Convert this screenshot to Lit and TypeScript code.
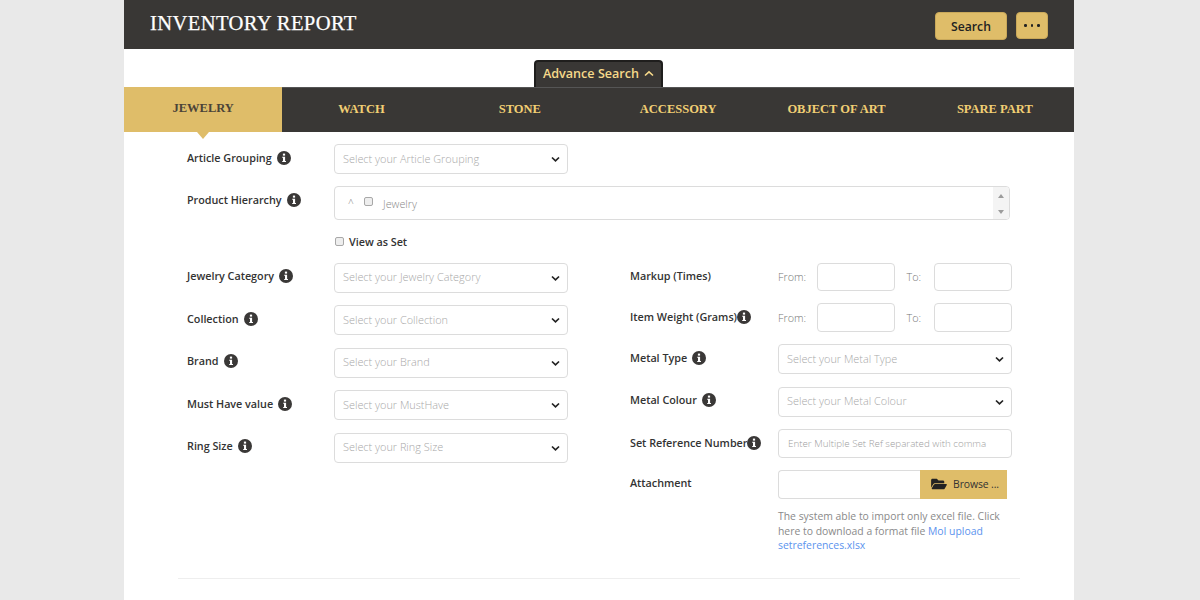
import { LitElement, html, css, svg } from 'lit';
import { customElement } from 'lit/decorators.js';

const info = html`<svg class="info" viewBox="0 0 14 14" width="14" height="14">
  <circle cx="7" cy="7" r="7" fill="#3a3837"></circle>
  <rect x="5.9" y="2.6" width="2.2" height="2" fill="#fff"></rect>
  <path d="M5.2 5.7H8.1V9.9H9V11H5.2V9.9H6V6.8H5.2Z" fill="#fff"></path>
</svg>`;

const chevron = svg`<path d="M1 1.5L4.5 4.8L8 1.5" fill="none" stroke="#222" stroke-width="1.7"></path>`;

const selectBox = (placeholder: string) => html`<div class="select">
  <span>${placeholder}</span>
  <svg viewBox="0 0 9 6" width="9" height="6">${chevron}</svg>
</div>`;

const leftRows = [
  ['Jewelry Category', 'Select your Jewelry Category'],
  ['Collection', 'Select your Collection'],
  ['Brand', 'Select your Brand'],
  ['Must Have value', 'Select your MustHave'],
  ['Ring Size', 'Select your Ring Size'],
] as const;

@customElement('app-root')
export class AppRoot extends LitElement {
  static styles = css`
    :host {
      display: block;
      min-height: 600px;
      background: #e9e9e9;
      font-family: "Open Sans", sans-serif;
      --dark: #393735;
      --gold: #dfbd69;
    }
    .page {
      width: 950px;
      height: 600px;
      margin-left: 124px;
      background: #fff;
      overflow: hidden;
    }
    .header {
      height: 49px;
      background: var(--dark);
      display: flex;
      align-items: flex-start;
      justify-content: space-between;
      padding: 0 26px;
      box-sizing: border-box;
    }
    .title {
      margin: 10px 0 0;
      font: 400 20.6px/26px "Liberation Serif", serif;
      letter-spacing: 0.38px;
      -webkit-text-stroke: 0.25px #fff;
      color: #fff;
    }
    .actions {
      display: flex;
      gap: 9px;
      margin-top: 12px;
    }
    .btn {
      background: var(--gold);
      border: 1px solid #c9a85a;
      border-radius: 4px;
      box-sizing: border-box;
      color: #222;
      font-size: 12.2px;
      font-weight: 600;
      display: flex;
      align-items: center;
      justify-content: center;
    }
    .btn.search {
      width: 72px;
      height: 28px;
    }
    .btn.more {
      width: 32px;
      height: 27px;
      gap: 4px;
    }
    .btn.more i {
      width: 2.5px;
      height: 2.5px;
      border-radius: 50%;
      background: #222;
    }
    .advance-row {
      height: 38px;
      display: flex;
      justify-content: center;
      align-items: flex-end;
    }
    .advance {
      width: 129px;
      height: 27px;
      margin-right: 1px;
      padding-bottom: 2px;
      box-sizing: border-box;
      background: var(--dark);
      border: 2px solid #1f1e1d;
      border-bottom: 0;
      border-radius: 4px 4px 0 0;
      color: #f6d98a;
      font-size: 12.6px;
      font-weight: 600;
      display: flex;
      align-items: center;
      justify-content: center;
      gap: 5px;
    }
    .tabs {
      display: grid;
      grid-template-columns: repeat(6, 1fr);
      height: 45px;
      background: var(--dark);
      border-top: 1px solid #555;
      box-sizing: border-box;
    }
    .tab {
      position: relative;
      display: flex;
      align-items: center;
      justify-content: center;
      padding-bottom: 2px;
      font: 700 12.5px "Liberation Serif", serif;
      color: #f2cf74;
    }
    .tab.active {
      background: var(--gold);
      color: #4b4338;
      margin-top: -1px;
    }
    .tab.active::after {
      content: "";
      position: absolute;
      left: 50%;
      top: 100%;
      margin-left: -6px;
      border: 6px solid transparent;
      border-top: 7px solid var(--gold);
      border-bottom: 0;
    }
    .form {
      padding: 12px 0 0 63px;
    }
    .row {
      display: flex;
      align-items: flex-start;
    }
    .row.first {
      margin-bottom: 12px;
    }
    .label {
      width: 147px;
      flex: none;
      display: flex;
      align-items: center;
      gap: 5px;
      font-size: 10.8px;
      font-weight: 600;
      letter-spacing: -0.02px;
      color: #333;
      padding-top: 5.5px;
      line-height: 16px;
      white-space: nowrap;
    }
    .label.tight {
      gap: 0;
    }
    .info {
      flex: none;
    }
    .select {
      width: 234px;
      height: 30px;
      box-sizing: border-box;
      border: 1px solid #dcdcdc;
      border-radius: 4px;
      display: flex;
      align-items: center;
      justify-content: space-between;
      padding: 0 7px 2px 8px;
      font-size: 10.9px;
      font-weight: 300;
      color: #a8a8a8;
      background: #fff;
    }
    .select svg {
      margin-top: 2px;
    }
    .tree {
      width: 676px;
      height: 34px;
      box-sizing: border-box;
      border: 1px solid #dcdcdc;
      border-radius: 4px;
      display: flex;
      align-items: center;
      font-size: 10.8px;
      font-weight: 300;
      color: #888;
      overflow: hidden;
    }
    .caret {
      margin-left: 13px;
      width: 16px;
      font-size: 10px;
      color: #888;
    }
    .check {
      display: inline-block;
      width: 9px;
      height: 9px;
      flex: none;
      background: #eeeeee;
      border: 1px solid #a8a8a8;
      border-radius: 2px;
      box-sizing: border-box;
    }
    .tree .check {
      margin-top: -4px;
    }
    .tree .name {
      margin-left: 10px;
      flex: 1;
    }
    .scroll {
      width: 16px;
      align-self: stretch;
      background: #f4f4f4;
      display: flex;
      flex-direction: column;
      justify-content: space-between;
      align-items: center;
      padding: 7px 0 5px;
      box-sizing: border-box;
    }
    .scroll i {
      border: 3px solid transparent;
      border-bottom: 4px solid #9c9c9c;
      border-top: 0;
    }
    .scroll i.down {
      border-top: 4px solid #9c9c9c;
      border-bottom: 0;
    }
    .view-set {
      margin: 16px 0 0 148px;
      height: 10px;
      display: flex;
      align-items: center;
      gap: 5px;
      font-size: 10.8px;
      font-weight: 600;
      letter-spacing: -0.02px;
      color: #333;
    }
    .columns {
      display: flex;
      margin-top: 16.5px;
    }
    .col-left {
      width: 443px;
      flex: none;
      display: flex;
      flex-direction: column;
      gap: 12.5px;
    }
    .col-right {
      display: flex;
      flex-direction: column;
      gap: 12.4px;
    }
    .col-right .label {
      width: 148px;
    }
    .range {
      display: flex;
      align-items: center;
      font-size: 10.8px;
      font-weight: 300;
      color: #777;
    }
    .range .from {
      width: 38.5px;
    }
    .range .to {
      width: 39px;
      padding-left: 12px;
      box-sizing: border-box;
    }
    .box {
      width: 78px;
      height: 28.5px;
      box-sizing: border-box;
      border: 1px solid #dcdcdc;
      border-radius: 4px;
    }
    .text-input {
      width: 234px;
      height: 28.5px;
      box-sizing: border-box;
      border: 1px solid #dcdcdc;
      border-radius: 4px;
      display: flex;
      align-items: center;
      padding-left: 9px;
      font-size: 9.8px;
      font-weight: 300;
      color: #a0a0a0;
      white-space: nowrap;
    }
    .file {
      display: flex;
      height: 29px;
    }
    .file .empty {
      width: 142px;
      box-sizing: border-box;
      border: 1px solid #dcdcdc;
      border-right: 0;
      border-radius: 4px 0 0 4px;
    }
    .browse {
      width: 87px;
      background: var(--gold);
      display: flex;
      align-items: center;
      justify-content: center;
      gap: 6px;
      padding-left: 3px;
      box-sizing: border-box;
      font-size: 10.4px;
      letter-spacing: -0.1px;
      color: #333;
    }
    .help {
      width: 230px;
      margin: 10px 0 0;
      font-size: 10.4px;
      line-height: 14.7px;
      color: #8a8a8a;
    }
    .help a {
      color: #5b93ee;
    }
    .rule {
      height: 1px;
      background: #eeeeee;
      margin: 25px 0 0 -9px;
      width: 842px;
    }
  `;

  render() {
    return html`<div class="page">
      <div class="header">
        <h1 class="title">INVENTORY REPORT</h1>
        <div class="actions">
          <div class="btn search">Search</div>
          <div class="btn more"><i></i><i></i><i></i></div>
        </div>
      </div>
      <div class="advance-row">
        <div class="advance">
          Advance Search
          <svg viewBox="0 0 10 7" width="10" height="7">
            <path d="M1 5.5L5 1.8L9 5.5" fill="none" stroke="#f6d98a" stroke-width="1.6"></path>
          </svg>
        </div>
      </div>
      <div class="tabs">
        <div class="tab active">JEWELRY</div>
        <div class="tab">WATCH</div>
        <div class="tab">STONE</div>
        <div class="tab">ACCESSORY</div>
        <div class="tab">OBJECT OF ART</div>
        <div class="tab">SPARE PART</div>
      </div>
      <div class="form">
        <div class="row first">
          <div class="label">Article Grouping ${info}</div>
          ${selectBox('Select your Article Grouping')}
        </div>
        <div class="row">
          <div class="label">Product Hierarchy ${info}</div>
          <div class="tree">
            <span class="caret">^</span>
            <span class="check"></span>
            <span class="name">Jewelry</span>
            <div class="scroll"><i></i><i class="down"></i></div>
          </div>
        </div>
        <div class="view-set"><span class="check"></span>View as Set</div>
        <div class="columns">
          <div class="col-left">
            ${leftRows.map(
              ([label, placeholder]) => html`<div class="row">
                <div class="label">${label} ${info}</div>
                ${selectBox(placeholder)}
              </div>`
            )}
          </div>
          <div class="col-right">
            <div class="row">
              <div class="label">Markup (Times)</div>
              <div class="range">
                <span class="from">From:</span><span class="box"></span>
                <span class="to">To:</span><span class="box"></span>
              </div>
            </div>
            <div class="row">
              <div class="label tight">Item Weight (Grams)${info}</div>
              <div class="range">
                <span class="from">From:</span><span class="box"></span>
                <span class="to">To:</span><span class="box"></span>
              </div>
            </div>
            <div class="row">
              <div class="label">Metal Type ${info}</div>
              ${selectBox('Select your Metal Type')}
            </div>
            <div class="row">
              <div class="label">Metal Colour ${info}</div>
              ${selectBox('Select your Metal Colour')}
            </div>
            <div class="row">
              <div class="label tight">Set Reference Number${info}</div>
              <div class="text-input">Enter Multiple Set Ref separated with comma</div>
            </div>
            <div class="row">
              <div class="label">Attachment</div>
              <div>
                <div class="file">
                  <div class="empty"></div>
                  <div class="browse">
                    <svg viewBox="0 0 576 512" width="16" height="14">
                      <path fill="#222" d="M572.694 292.093L500.27 416.248A63.997 63.997 0 0 1 444.989 448H45.025c-18.523 0-30.064-20.093-20.731-36.093l72.424-124.155A64 64 0 0 1 152 256h399.964c18.523 0 30.064 20.093 20.73 36.093zM152 224h328v-48c0-26.51-21.49-48-48-48H272l-64-64H48C21.49 64 0 85.49 0 112v278.046l69.077-118.418C86.214 242.25 117.989 224 152 224z"></path>
                    </svg>
                    Browse ...
                  </div>
                </div>
                <p class="help">
                  The system able to import only excel file. Click here to download a format file
                  <a>MoI upload setreferences.xlsx</a>
                </p>
              </div>
            </div>
          </div>
        </div>
        <div class="rule"></div>
      </div>
    </div>`;
  }
}
